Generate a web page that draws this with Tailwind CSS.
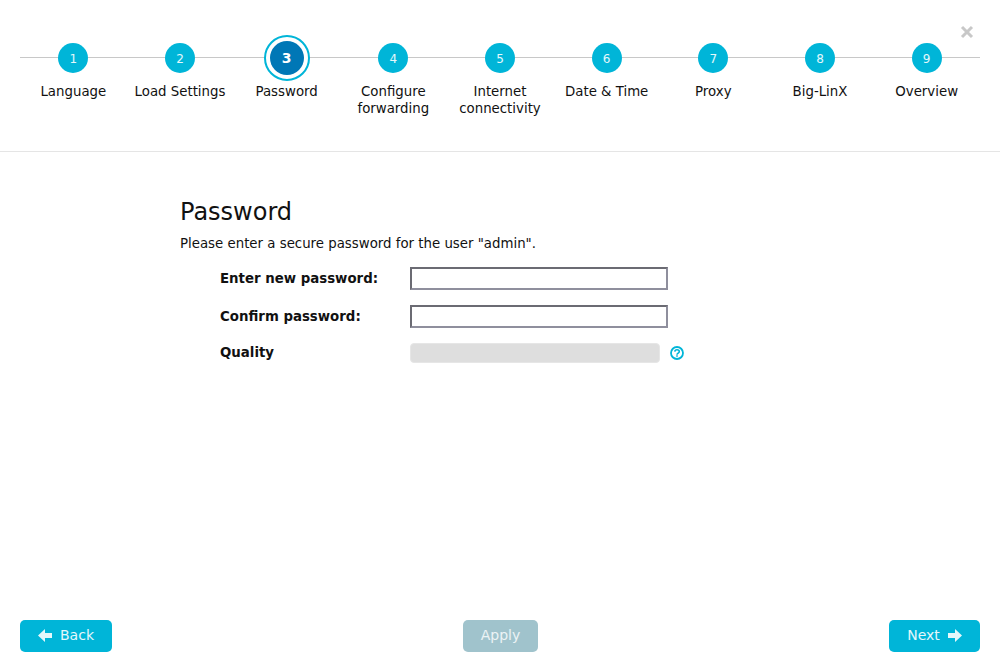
<!DOCTYPE html>
<html lang="en">
<head>
    <meta charset="UTF-8">
    <title>Setup Wizard</title>
    <script src="https://cdn.jsdelivr.net/npm/@tailwindcss/browser@4"></script>
</head>
<body class="bg-white overflow-hidden font-['DejaVu_Sans',sans-serif] text-[13.33px] text-[#111]">
<div class="h-[672px] flex flex-col">
    <!-- stepper -->
    <header class="relative h-[152px] border-b border-[#e5e5e5] px-[20px] pt-[35px]">
        <div class="absolute left-[20px] right-[20px] top-[57px] h-px bg-[#c8c8c8]"></div>
        <button class="absolute right-[25px] top-[24px] text-[#c8c8c8]">
            <svg class="w-[16px] h-[16px] block" viewBox="0 0 16 16"><path d="M3 3 13 13M13 3 3 13" stroke="currentColor" stroke-width="3" fill="none"/></svg>
        </button>
        <ol class="relative grid grid-cols-9 text-center leading-[17px]">
            <li class="flex flex-col items-center">
                <div class="h-[46px] flex items-center"><span class="w-[30px] h-[30px] pt-[2px] rounded-full bg-[#00b5d8] text-white/90 text-[12px] flex items-center justify-center">1</span></div>
                <span class="mt-[2px]">Language</span>
            </li>
            <li class="flex flex-col items-center">
                <div class="h-[46px] flex items-center"><span class="w-[30px] h-[30px] pt-[2px] rounded-full bg-[#00b5d8] text-white/90 text-[12px] flex items-center justify-center">2</span></div>
                <span class="mt-[2px]">Load Settings</span>
            </li>
            <li class="flex flex-col items-center">
                <div class="h-[46px] flex items-center"><span class="w-[46px] h-[46px] rounded-full border-2 border-[#00b5d8] bg-white flex items-center justify-center"><span class="w-[34px] h-[34px] rounded-full bg-[#0077b6] text-white text-[14px] font-bold flex items-center justify-center">3</span></span></div>
                <span class="mt-[2px]">Password</span>
            </li>
            <li class="flex flex-col items-center">
                <div class="h-[46px] flex items-center"><span class="w-[30px] h-[30px] pt-[2px] rounded-full bg-[#00b5d8] text-white/90 text-[12px] flex items-center justify-center">4</span></div>
                <span class="mt-[2px]">Configure<br>forwarding</span>
            </li>
            <li class="flex flex-col items-center">
                <div class="h-[46px] flex items-center"><span class="w-[30px] h-[30px] pt-[2px] rounded-full bg-[#00b5d8] text-white/90 text-[12px] flex items-center justify-center">5</span></div>
                <span class="mt-[2px]">Internet<br>connectivity</span>
            </li>
            <li class="flex flex-col items-center">
                <div class="h-[46px] flex items-center"><span class="w-[30px] h-[30px] pt-[2px] rounded-full bg-[#00b5d8] text-white/90 text-[12px] flex items-center justify-center">6</span></div>
                <span class="mt-[2px]">Date &amp; Time</span>
            </li>
            <li class="flex flex-col items-center">
                <div class="h-[46px] flex items-center"><span class="w-[30px] h-[30px] pt-[2px] rounded-full bg-[#00b5d8] text-white/90 text-[12px] flex items-center justify-center">7</span></div>
                <span class="mt-[2px]">Proxy</span>
            </li>
            <li class="flex flex-col items-center">
                <div class="h-[46px] flex items-center"><span class="w-[30px] h-[30px] pt-[2px] rounded-full bg-[#00b5d8] text-white/90 text-[12px] flex items-center justify-center">8</span></div>
                <span class="mt-[2px]">Big-LinX</span>
            </li>
            <li class="flex flex-col items-center">
                <div class="h-[46px] flex items-center"><span class="w-[30px] h-[30px] pt-[2px] rounded-full bg-[#00b5d8] text-white/90 text-[12px] flex items-center justify-center">9</span></div>
                <span class="mt-[2px]">Overview</span>
            </li>
        </ol>
    </header>

    <!-- password form -->
    <main class="flex-1 pl-[180px] pt-[44px]">
        <h1 class="text-[24px] leading-[32px]">Password</h1>
        <p class="mt-[7px] leading-[17px]">Please enter a secure password for the user "admin".</p>
        <div class="mt-[15px] pl-[40px] flex flex-col">
            <div class="flex items-center h-[23px]">
                <label class="w-[190px] font-bold">Enter new password:</label>
                <input type="password" class="w-[258px] h-[23px] bg-white border-2 border-t-[#6b6b73] border-l-[#6b6b73] border-r-[#8f8f9d] border-b-[#8f8f9d] outline-none">
            </div>
            <div class="flex items-center h-[23px] mt-[15px]">
                <label class="w-[190px] font-bold">Confirm password:</label>
                <input type="password" class="w-[258px] h-[23px] bg-white border-2 border-t-[#6b6b73] border-l-[#6b6b73] border-r-[#8f8f9d] border-b-[#8f8f9d] outline-none">
            </div>
            <div class="flex items-center h-[20px] mt-[15px]">
                <label class="w-[190px] font-bold">Quality</label>
                <div class="w-[250px] h-[20px] rounded-[4px] bg-[#dedede] border border-[#e6e6e6]"></div>
                <svg class="ml-[10px] w-[14px] h-[14px]" viewBox="0 0 14 14" fill="none" stroke="#00b5d8">
                    <circle cx="7" cy="7" r="6" stroke-width="1.800"/>
                    <path d="M4.800 5.600C4.900 4.300 5.900 3.700 7 3.700c1.300 0 2.300.6 2.300 1.800 0 1.600-2.300 1.500-2.300 3.200" stroke-width="1.600"/>
                    <path d="M7 9.300v1.400" stroke-width="1.600"/>
                </svg>
            </div>
        </div>
    </main>

    <!-- wizard buttons -->
    <footer class="flex justify-between px-[20px] pb-[20px] text-[14px]">
        <button class="h-[32px] w-[92px] pb-[2px] rounded-[5px] bg-[#00b5d8] text-white/90 flex items-center justify-center gap-[8px]">
            <svg class="w-[14px] h-[13px]" viewBox="0 0 14 13" fill="currentColor"><path d="M0 6.500 7 0V4H14V9H7V13Z"/></svg>
            Back
        </button>
        <button class="h-[32px] w-[75px] pb-[2px] rounded-[5px] bg-[#a0c3cc] text-white/80">Apply</button>
        <button class="h-[32px] w-[91px] pb-[2px] rounded-[5px] bg-[#00b5d8] text-white/90 flex items-center justify-center gap-[8px]">
            Next
            <svg class="w-[14px] h-[13px]" viewBox="0 0 14 13" fill="currentColor"><path d="M14 6.500 7 0V4H0V9H7V13Z"/></svg>
        </button>
    </footer>
</div>
</body>
</html>
